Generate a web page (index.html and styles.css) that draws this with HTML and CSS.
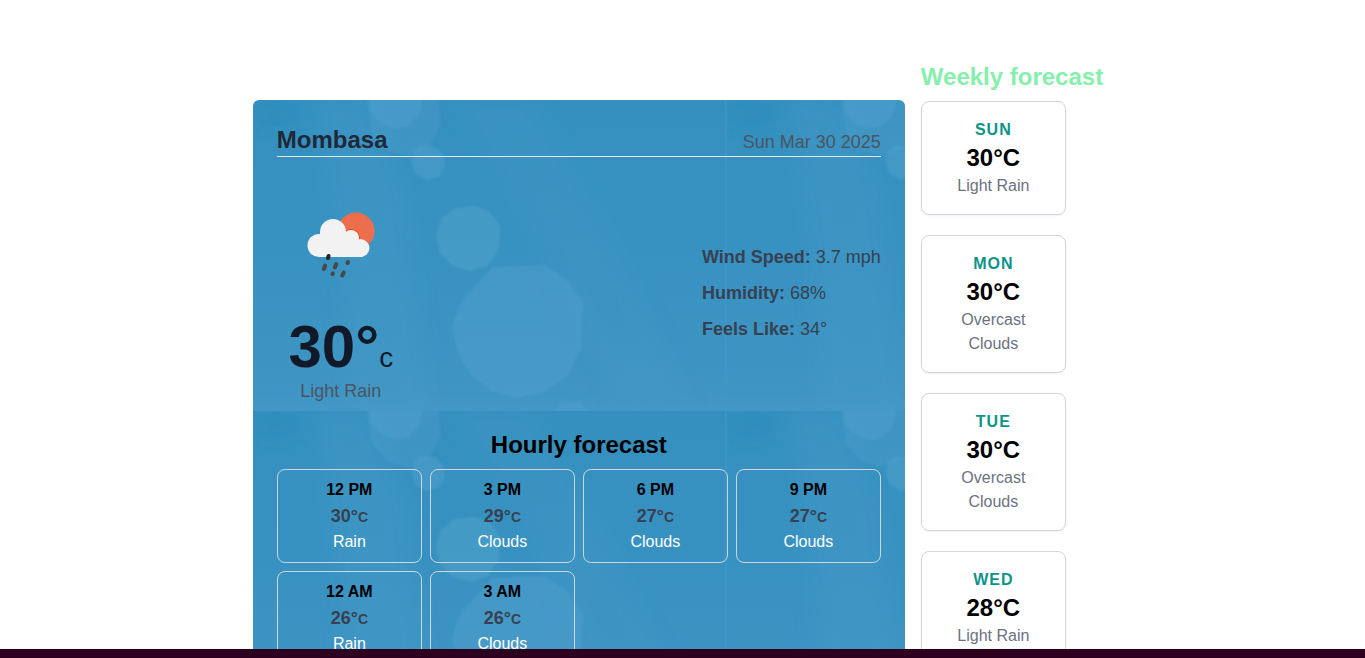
FILE: index.html
```html
<!DOCTYPE html>
<html lang="en">
<head>
<meta charset="utf-8">
<meta name="viewport" content="width=device-width, initial-scale=1">
<title>Weather forecast</title>
<link rel="stylesheet" href="styles.css">
</head>
<body>
<main class="page">
  <section class="current">
    <svg class="backdrop" aria-hidden="true">
      <defs>
        <linearGradient id="sky" x1="0" y1="0" x2="0" y2="1">
          <stop offset="0" stop-color="#3590bf"/>
          <stop offset="0.5" stop-color="#3892c1"/>
          <stop offset="0.95" stop-color="#3f95c3"/>
          <stop offset="1" stop-color="#4398c6"/>
        </linearGradient>
        <filter id="soft"><feGaussianBlur stdDeviation="10"/></filter>
        <filter id="edge"><feGaussianBlur stdDeviation="1"/></filter>
        <pattern id="tile" width="474" height="311" patternUnits="userSpaceOnUse">
          <rect width="474" height="311" fill="url(#sky)"/>
          <g filter="url(#soft)">
            <path d="M62 0H115L150 90L175 311H95L88 160Z" fill="#489bc8" opacity="0.32"/>
            <path d="M200 0H275L350 120L440 311H370L275 120Z" fill="#4699c7" opacity="0.18"/>
            <path d="M0 0H55L40 28H0Z" fill="#288aba" opacity="0.45"/>
          </g>
          <g filter="url(#edge)" fill="#66abd6">
            <path d="M113 -5H187V25L176 48L155 57L134 50L119 33Z" opacity="0.17"/>
            <path d="M116 -5H170L166 15L155 26L142 29L127 23L118 12Z" opacity="0.25"/>
            <path d="M168 46L181 46L190 54L192 66L186 77L173 80L162 73L158 61L161 51Z" opacity="0.28"/>
            <path d="M202 108L222 106L237 112L247 126L246 149L235 165L218 171L200 166L187 153L183 136L188 119Z" fill="#66b3cf" opacity="0.28"/>
            <path d="M239 167L292 165L314 180L330 203L328 249L314 276L290 293L263 298L239 291L217 274L205 253L199 227L207 203Z" opacity="0.24"/>
            <path d="M300 312L307 304L326 301L336 312Z" opacity="0.2"/>
          </g>
          <rect x="472" width="4" height="311" fill="#409aca" opacity="0.5"/>
        </pattern>
      </defs>
      <rect width="100%" height="100%" fill="url(#tile)"/>
    </svg>

    <header class="current-head">
      <h1 class="city">Mombasa</h1>
      <p class="date">Sun Mar 30 2025</p>
    </header>

    <div class="now">
      <div class="now-main">
        <svg class="icon" viewBox="0 0 128 128" role="img" aria-label="Light rain">
          <circle cx="79" cy="50" r="18.500" fill="#ec6e4c"/>
          <g fill="#f04d25">
            <circle cx="74" cy="57" r="9"/>
            <path d="M78 60A9 9 0 0 1 92 64L86 68Z"/>
          </g>
          <g fill="#f2f2f2">
            <circle cx="42" cy="64.500" r="11.500"/>
            <circle cx="56" cy="51" r="13"/>
            <circle cx="74" cy="57" r="8"/>
            <circle cx="83.500" cy="67" r="9"/>
            <path d="M43 52H77L86 64V76H42Z"/>
          </g>
          <g stroke="#484848" stroke-width="4" stroke-linecap="round">
            <path d="M51.500 75L51 77" stroke="#282828"/>
            <path d="M48.200 84.500L46.800 88M59.200 83L57.800 86.500M71 81L70.500 82M55.800 92.300L55.500 93M66.800 91.500L65.200 94.500"/>
          </g>
        </svg>
        <p class="temp">30°<span class="unit">c</span></p>
        <p class="condition">Light Rain</p>
      </div>
      <ul class="stats">
        <li><strong>Wind Speed:</strong> 3.7 mph</li>
        <li><strong>Humidity:</strong> 68%</li>
        <li><strong>Feels Like:</strong> 34°</li>
      </ul>
    </div>

    <section class="hourly">
      <h2 class="hourly-title">Hourly forecast</h2>
      <ul class="hours">
        <li class="hour"><h3>12 PM</h3><p class="hour-temp">30°<small>C</small></p><p>Rain</p></li>
        <li class="hour"><h3>3 PM</h3><p class="hour-temp">29°<small>C</small></p><p>Clouds</p></li>
        <li class="hour"><h3>6 PM</h3><p class="hour-temp">27°<small>C</small></p><p>Clouds</p></li>
        <li class="hour"><h3>9 PM</h3><p class="hour-temp">27°<small>C</small></p><p>Clouds</p></li>
        <li class="hour"><h3>12 AM</h3><p class="hour-temp">26°<small>C</small></p><p>Rain</p></li>
        <li class="hour"><h3>3 AM</h3><p class="hour-temp">26°<small>C</small></p><p>Clouds</p></li>
      </ul>
    </section>
  </section>

  <section class="weekly">
    <h2 class="weekly-title">Weekly forecast</h2>
    <ul class="days">
      <li class="day"><h3>SUN</h3><p class="day-temp">30°C</p><p class="day-text">Light Rain</p></li>
      <li class="day"><h3>MON</h3><p class="day-temp">30°C</p><p class="day-text">Overcast Clouds</p></li>
      <li class="day"><h3>TUE</h3><p class="day-temp">30°C</p><p class="day-text">Overcast Clouds</p></li>
      <li class="day"><h3>WED</h3><p class="day-temp">28°C</p><p class="day-text">Light Rain</p></li>
    </ul>
  </section>
</main>
<div class="bottom-bar"></div>
</body>
</html>
```

FILE: styles.css
```css
* {
  box-sizing: border-box;
  margin: 0;
  padding: 0;
}

body {
  display: flex;
  flex-direction: column;
  height: 100vh;
  overflow: hidden;
  background: #fff;
  color: #000;
  font-family: "Liberation Sans", Arial, sans-serif;
  font-size: 16px;
  line-height: 24px;
}

ul {
  list-style: none;
}

h3 {
  font-size: 16px;
}

.page {
  display: flex;
  flex: 1;
  justify-content: center;
  gap: 16px;
  min-height: 0;
  overflow: hidden;
}

.current {
  position: relative;
  isolation: isolate;
  flex: 0 1 652px;
  margin-top: 100px;
  padding: 24px;
  border-radius: 6px 6px 0 0;
  overflow: hidden;
}

.backdrop {
  position: absolute;
  inset: 0;
  z-index: -1;
  width: 100%;
  height: 100%;
}

.current-head {
  display: flex;
  justify-content: space-between;
  align-items: baseline;
  border-bottom: 1px solid #e5e7eb;
}

.city {
  color: #1f2937;
  font-size: 24px;
  line-height: 32px;
}

.date {
  color: #4b5563;
  font-size: 18px;
  line-height: 28px;
}

.now {
  display: flex;
  justify-content: space-between;
  align-items: center;
  margin: 24px 0;
}

.now-main {
  display: flex;
  flex-direction: column;
  align-items: center;
}

.icon {
  width: 128px;
  height: 128px;
}

.temp {
  margin-top: 8px;
  color: #111827;
  font-size: 60px;
  font-weight: 700;
  line-height: 60px;
}

.unit {
  font-size: 28px;
  font-weight: 400;
  line-height: 28px;
}

.condition {
  color: #4b5563;
  font-size: 18px;
  line-height: 28px;
}

.stats {
  display: grid;
  gap: 8px;
  color: #374151;
  font-size: 18px;
  line-height: 28px;
}

.hourly-title {
  font-size: 24px;
  line-height: 32px;
  text-align: center;
}

.hours {
  display: grid;
  grid-template-columns: repeat(4, 1fr);
  gap: 8px;
  margin-top: 8px;
}

.hour {
  padding: 8px;
  border: 1px solid #d1d5db;
  border-radius: 8px;
  color: #fff;
  text-align: center;
}

.hour h3 {
  color: #000;
}

.hour-temp {
  color: #374151;
  font-size: 18px;
  font-weight: 700;
  line-height: 28px;
}

.hour-temp small {
  font-size: 14px;
  line-height: 20px;
}

.weekly {
  padding: 61px 9px 0 0;
}

.weekly-title {
  color: #86efac;
  font-size: 24px;
  line-height: 32px;
}

.days {
  display: grid;
  gap: 20px;
  width: 145px;
  margin-top: 8px;
}

.day {
  padding: 16px;
  border: 1px solid #d1d5db;
  border-radius: 8px;
  box-shadow: 0 1px 2px rgba(0, 0, 0, 0.05);
  text-align: center;
}

.day h3 {
  color: #0d9488;
  letter-spacing: 1px;
}

.day-temp {
  font-size: 24px;
  font-weight: 700;
  line-height: 32px;
}

.day-text {
  color: #6b7280;
}

.bottom-bar {
  flex: 0 0 9px;
  background: #2c001e;
}
```
